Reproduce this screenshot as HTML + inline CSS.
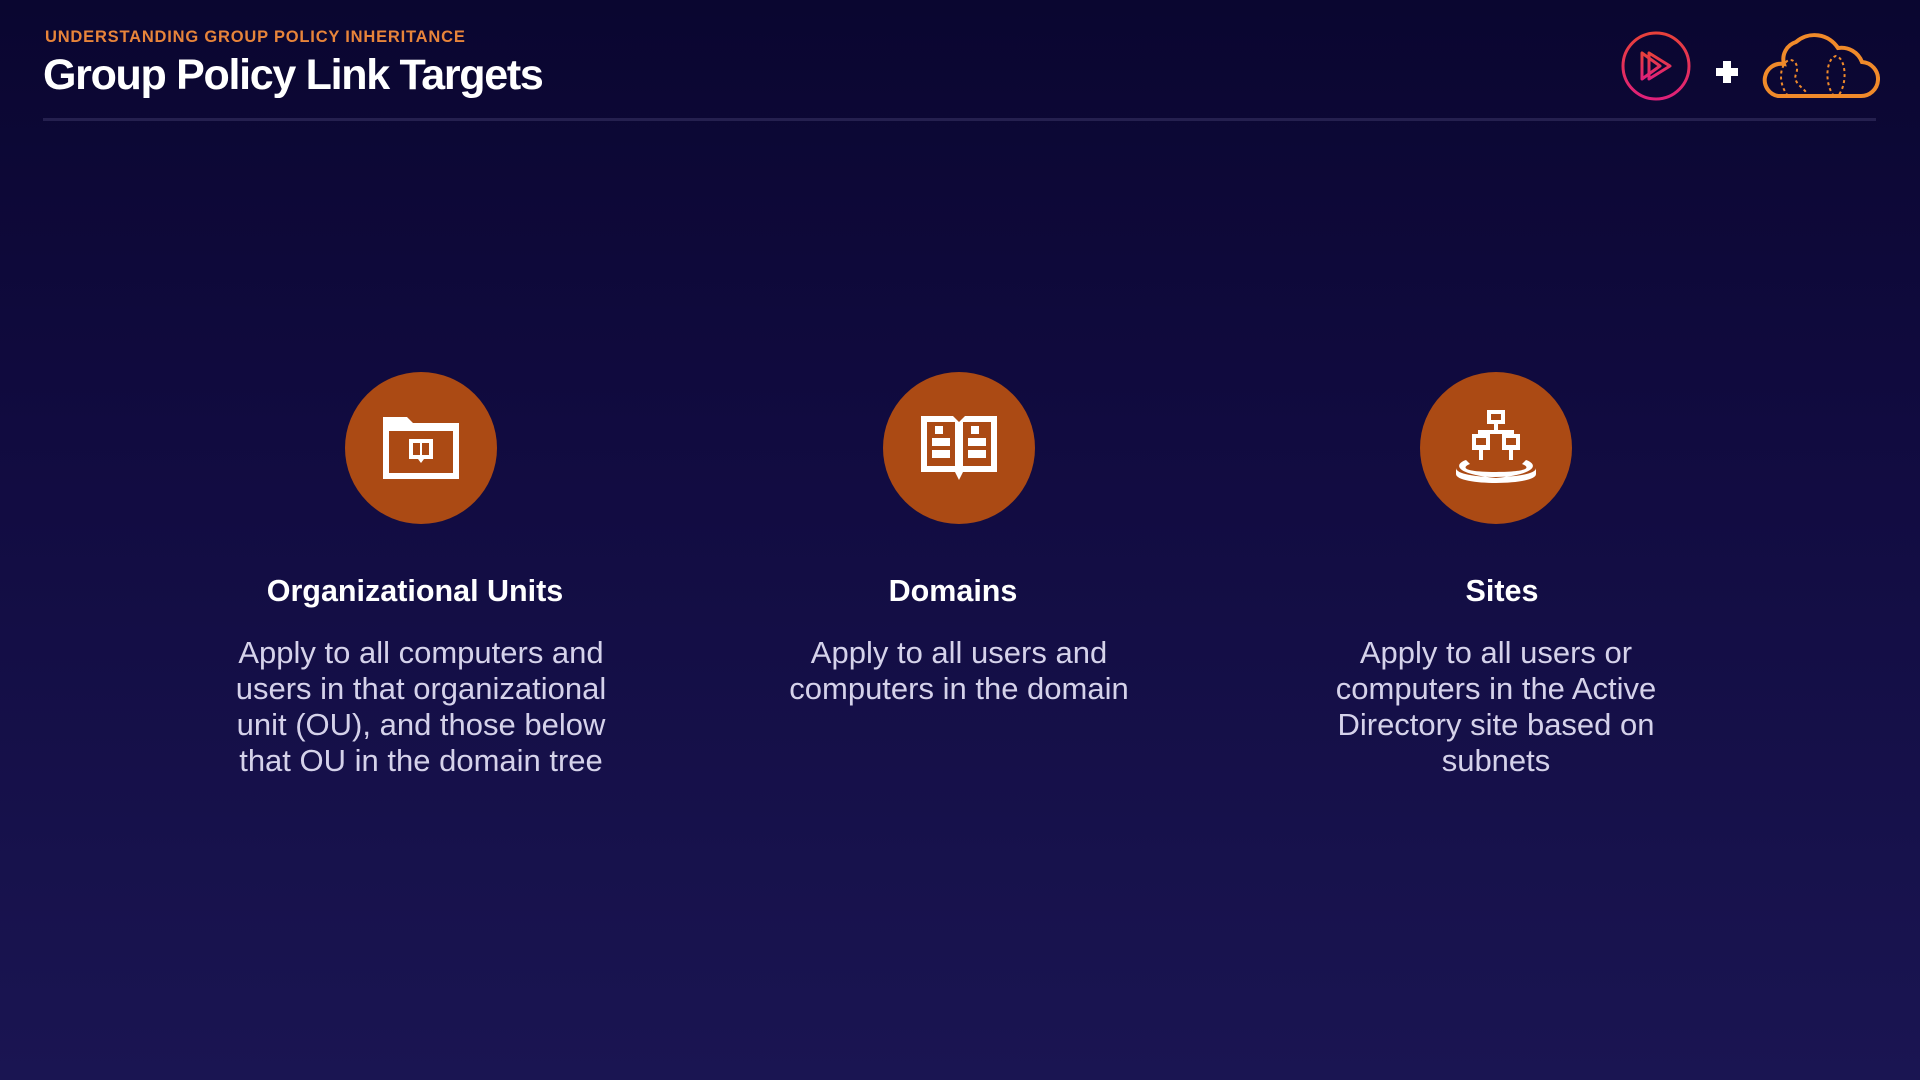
<!DOCTYPE html>
<html><head><meta charset="utf-8"><style>
html,body{margin:0;padding:0}
body{width:1920px;height:1080px;overflow:hidden;position:relative;background:linear-gradient(180deg,#0a0630 0%,#110b40 40%,#1a1552 100%);font-family:"Liberation Sans",sans-serif;color:#fff}
.sub{position:absolute;left:45px;top:28px;font-size:16.5px;font-weight:bold;color:#e8843a;letter-spacing:0.8px}
.title{position:absolute;left:43px;top:51px;font-size:43px;font-weight:bold;letter-spacing:-1.3px}
.rule{position:absolute;left:43px;top:118px;width:1833px;height:3px;background:#25204f}
.col{position:absolute;top:372px;width:520px;text-align:center}
.circ{width:152px;height:152px;border-radius:50%;background:#ab4a14;margin:0 auto;display:flex;align-items:center;justify-content:center}
.h{margin-top:50px;font-size:30.5px;font-weight:bold}
.p{margin-top:26px;font-size:31px;line-height:36px;color:#d5d2ea}
</style></head><body>
<div class="sub">UNDERSTANDING GROUP POLICY INHERITANCE</div>
<div class="title">Group Policy Link Targets</div>
<div class="rule"></div>
<svg style="position:absolute;left:1620px;top:30px" width="72" height="72" viewBox="0 0 72 72">
<defs><linearGradient id="g" x1="0" y1="0" x2="0" y2="1"><stop offset="0" stop-color="#e8413a"/><stop offset="1" stop-color="#e0207a"/></linearGradient></defs>
<circle cx="36" cy="36" r="33" fill="none" stroke="url(#g)" stroke-width="3"/>
<path d="M22 23 L22 49 L40 36 Z M29 23 L29 49 L50 36 Z" fill="none" stroke="url(#g)" stroke-width="3" stroke-linejoin="round"/>
</svg>
<div style="position:absolute;left:1716px;top:68px;width:22px;height:8px;background:#fff"></div>
<div style="position:absolute;left:1723px;top:61px;width:8px;height:22px;background:#fff"></div>
<svg style="position:absolute;left:1758px;top:28px" width="122" height="72" viewBox="0 0 122 72">
<path d="M20 68 H102 A17 17 0 0 0 104 34 A22 22 0 0 0 80 20 A28 28 0 0 0 38 14 A18 18 0 0 0 26 36 A16 16 0 0 0 20 68 Z" fill="none" stroke="#f08a2a" stroke-width="4"/>
<path d="M30 68 C20 55 22 40 28 34 C34 28 42 36 38 46 C34 56 48 60 50 68 M76 68 C66 56 68 30 78 28 C88 30 90 56 80 68" fill="none" stroke="#f08a2a" stroke-width="2" stroke-dasharray="3 3"/>
</svg>

<div class="col" style="left:161px">
<div class="circ"><svg width="80" height="66" viewBox="0 0 80 66"><path d="M2 2 H26 L32 8 H78 V64 H2 Z" fill="#fff"/><rect x="8" y="16" width="64" height="42" fill="#ab4a14"/><path d="M28 24 H52 V44 H43 L40 48 L37 44 H28 Z" fill="#fff"/><path d="M32 28 H39 V40 H32 Z M41 28 H48 V40 H41 Z" fill="#ab4a14"/></svg></div>
<div class="h" style="margin-left:-12px">Organizational Units</div>
<div class="p">Apply to all computers and<br>users in that organizational<br>unit (OU), and those below<br>that OU in the domain tree</div>
</div>

<div class="col" style="left:699px">
<div class="circ"><svg width="80" height="68" viewBox="0 0 80 68"><path d="M2 2 H34 L40 8 L46 2 H78 V58 H44 L40 66 L36 58 H2 Z" fill="#fff"/><rect x="8" y="8" width="28" height="44" fill="#ab4a14"/><rect x="44" y="8" width="28" height="44" fill="#ab4a14"/><g fill="#fff"><rect x="16" y="12" width="8" height="8"/><rect x="13" y="24" width="18" height="8"/><rect x="13" y="36" width="18" height="8"/><rect x="52" y="12" width="8" height="8"/><rect x="49" y="24" width="18" height="8"/><rect x="49" y="36" width="18" height="8"/></g></svg></div>
<div class="h" style="margin-left:-12px">Domains</div>
<div class="p">Apply to all users and<br>computers in the domain</div>
</div>

<div class="col" style="left:1236px">
<div class="circ"><svg width="96" height="80" viewBox="0 0 96 80"><g fill="#fff"><rect x="39" y="2" width="18" height="14"/><rect x="46" y="16" width="4" height="8"/><rect x="30" y="22" width="36" height="4"/><rect x="24" y="26" width="18" height="16"/><rect x="54" y="26" width="18" height="16"/><rect x="31" y="42" width="4" height="10"/><rect x="61" y="42" width="4" height="10"/></g><g fill="#ab4a14"><rect x="43" y="6" width="10" height="6"/><rect x="28" y="30" width="10" height="7"/><rect x="58" y="30" width="10" height="7"/></g><path d="M18 52 C6 56 6 66 48 70 C90 66 90 56 78 52 L74 56 C84 60 78 64 48 64 C18 64 12 60 22 56 Z M8 60 C8 72 88 72 88 60 L88 66 C88 78 8 78 8 66 Z" fill="#fff"/></svg></div>
<div class="h" style="margin-left:12px">Sites</div>
<div class="p">Apply to all users or<br>computers in the Active<br>Directory site based on<br>subnets</div>
</div>
</body></html>
